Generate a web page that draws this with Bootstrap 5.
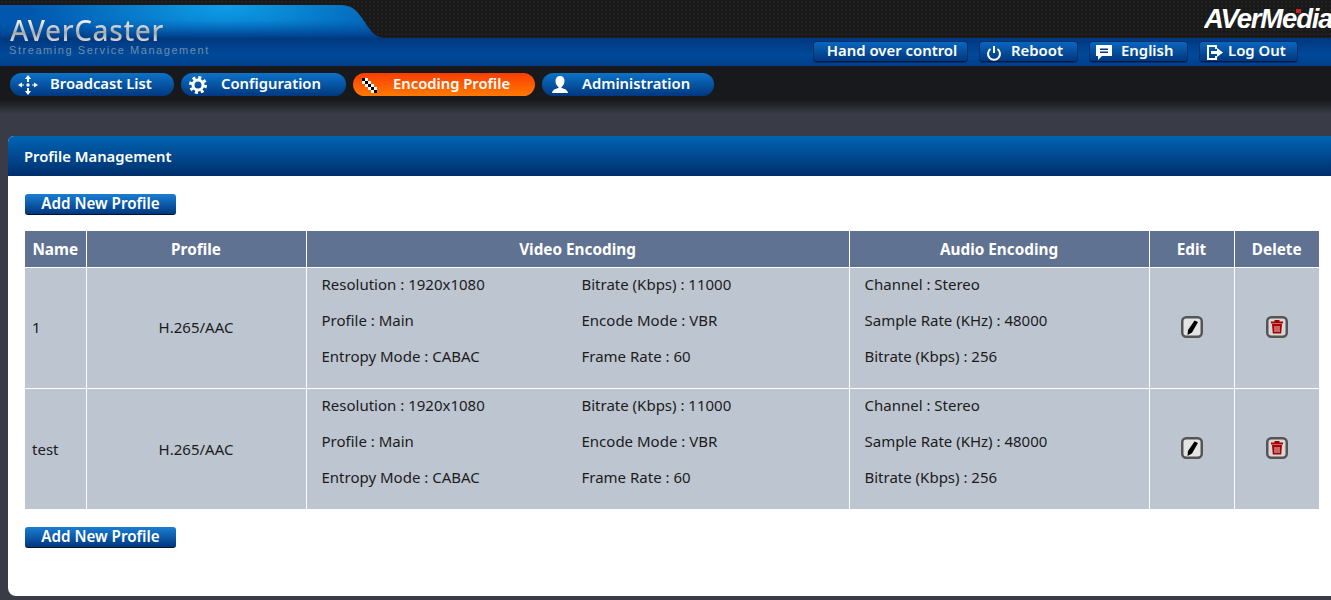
<!DOCTYPE html>
<html lang="en">
<head>
<meta charset="UTF-8">
<meta name="viewport" content="width=device-width, initial-scale=1.0">
<link href="https://cdn.jsdelivr.net/npm/bootstrap@5.3.0/dist/css/bootstrap.min.css" rel="stylesheet">
<title>AVerCaster</title>
<style>
html,body{height:600px;overflow:hidden;}
body{background:#393c46;font-family:"Noto Sans","Open Sans",sans-serif;font-size:15px;color:#1c1c1c;}
.app-head{height:66px;position:relative;background:#1a1a1a;}
.head-top{height:38px;background-color:#191919;background-image:radial-gradient(#222 0.7px,transparent 1px);background-size:4px 4px;display:flex;justify-content:flex-end;}
.brand-right{position:relative;color:#fff;font-family:"Liberation Sans",sans-serif;font-weight:700;font-style:italic;font-size:27.500px;letter-spacing:-1.200px;line-height:1;padding-top:5px;white-space:nowrap;width:127px;overflow:hidden;}
.brand-dot{position:absolute;left:92px;top:9px;width:5px;height:4px;background:#d0202a;}
.head-bar{height:28px;background:linear-gradient(#00377f,#004a99 60%,#003f8a);padding-left:814px;display:flex;gap:13px;padding-top:4px;}
.logo-shape{position:absolute;left:0;top:0;width:400px;height:66px;}
.logo-txt{position:absolute;left:9px;top:16px;line-height:1;}
.logo-name{font-family:"Noto Sans",sans-serif;font-size:28px;letter-spacing:.6px;font-weight:500;margin-left:1px;background:linear-gradient(#fff 10%,#a9a9a9 60%,#e8e8e8);-webkit-background-clip:text;background-clip:text;color:transparent;}
.logo-sub{font-family:"Liberation Sans",sans-serif;font-size:11px;letter-spacing:1.560px;color:#6f8cab;margin-top:1px;white-space:nowrap;}
.top-btn{width:97px;height:20px;border-radius:3px;background:linear-gradient(#0b66bd,#00387f);border:0;border-bottom:1px solid #001a3d;box-shadow:0 0 0 1px #00306e;color:#fff;font-weight:600;font-size:14.900px;line-height:18px;display:flex;align-items:center;white-space:nowrap;padding:0 0 4px;}
.top-btn svg{flex:none;margin:4px 7px 0 4px;}
.top-btn.handover{width:153px;padding-left:3px;justify-content:center;}
.top-btn.logout svg{margin-right:4px;}
.nav-strip{height:34px;background:#18191c;display:flex;gap:7px;padding:7px 0 0 10px;}
.pill{height:23px;border-radius:12px;background:linear-gradient(#0d72c8,#00387f);color:#fff;font-weight:600;font-size:14.800px;line-height:20px;display:flex;align-items:center;white-space:nowrap;padding-bottom:4px;}
.pill svg{flex:none;margin:4px 12px 0 8px;}
.pill.on{background:linear-gradient(#f93d00,#ff7a00);}
.pill.on svg{margin-right:16px;}
.pill.gear svg{margin-right:14px;}
.pill-broadcast{width:164px;}
.pill-config{width:165px;}
.pill-encoding{width:182px;}
.pill-admin{width:172px;}
.fade-strip{height:14px;background:linear-gradient(#18191c,#393c46);}
.mgmt-panel{margin:22px 0 0 8px;background:#fff;border-radius:6px 0 0 8px;height:460px;}
.mgmt-head{height:40px;background:linear-gradient(#0065b5,#002e6b);border-radius:6px 0 0 0;color:#fff;font-weight:600;font-size:14.800px;line-height:41px;padding-left:16px;}
.mgmt-body{padding:18px 12px 0 17px;}
.add-btn{display:block;width:151px;height:21px;padding:0 0 2px;border:0;border-radius:3px;background:linear-gradient(#1a7ed2,#00377f);border-bottom:1px solid #00122e;color:#fff;font-weight:600;font-size:15.200px;line-height:17px;}
.prof-table{border-collapse:collapse;table-layout:fixed;width:1294px;margin:16px 0 18px;}
.col-name{width:61px;}
.col-profile{width:220px;}
.col-video{width:543px;}
.col-audio{width:300px;}
.col-act{width:85px;}
.prof-table th{background:#5f7291;color:#fff;text-align:center;font-weight:700;font-size:15.300px;height:36px;border:1px solid #fff;border-top:0;padding:1px 0 0;}
.prof-table td{background:#bdc5d1;height:121px;border:1px solid #fff;padding:0;vertical-align:middle;}
.prof-table th:first-child,.prof-table td:first-child{border-left:0;}
.prof-table th:last-child,.prof-table td:last-child{border-right:0;}
.prof-table tr:last-child td{border-bottom:0;}
.prof-table td.name-cell{padding-left:7px;}
.prof-table td.info-cell{vertical-align:top;}
.info-grid{display:grid;grid-template-columns:260px 1fr;grid-auto-rows:36px;line-height:22px;padding:5px 0 0 15px;}
.info-one{grid-template-columns:1fr;}
.act-icon{display:block;margin:0 auto 1px;}
</style>
</head>
<body>
<header class="app-head">
  <div class="head-top"><div class="brand-right">AVerMedia<span class="brand-dot"></span></div></div>
  <div class="head-bar">
    <button class="top-btn handover">Hand over control</button>
    <button class="top-btn">
      <svg width="20" height="20" viewBox="0 0 20 20" fill="none" stroke="#fff" stroke-width="2"><path d="M6.500 7a6 6 0 1 0 7 0"/><path d="M10 4v7"/></svg>Reboot</button>
    <button class="top-btn">
      <svg width="20" height="20" viewBox="0 0 20 20" fill="#fff"><path d="M2 3h16v11H8l-4 4v-4H2z"/><path d="M6 6.500h8V8H6zM6 9.500h8V11H6z" fill="#00387f"/></svg>English</button>
    <button class="top-btn logout">
      <svg width="20" height="20" viewBox="0 0 20 20" fill="#fff"><path d="M3 3h10v4h-2V5H5v11h6v-2h2v4H3z"/><path d="M7 9h6V6l6 4.500-6 4.500v-3H7z"/></svg>Log Out</button>
  </div>
  <svg class="logo-shape" viewBox="0 0 400 66">
    <defs>
      <radialGradient id="lg" gradientUnits="userSpaceOnUse" cx="225" cy="5" r="200" gradientTransform="matrix(1 0 0 .3 0 4)"><stop offset="0" stop-color="#0e9ee8"/><stop offset="1" stop-color="#0057ad"/></radialGradient>
      <linearGradient id="lb" x1="0" y1="0" x2="0" y2="1"><stop offset=".45" stop-color="#0057ad" stop-opacity="0"/><stop offset="1" stop-color="#003c86"/></linearGradient>
    </defs>
    <path d="M0 5H340C352 5 356 10 362 18C370 30 374 38 384 38H0Z" fill="url(#lg)"/>
    <path d="M0 5H340C352 5 356 10 362 18C370 30 374 38 384 38H0Z" fill="url(#lb)"/>
  </svg>
  <div class="logo-txt"><div class="logo-name">AVerCaster</div><div class="logo-sub">Streaming Service Management</div></div>
</header>
<nav class="nav-strip">
  <div class="pill pill-broadcast">
    <svg width="20" height="20" viewBox="0 0 20 20" fill="#fff"><path d="M10 0l3 4h-2v3H9V4H7zM10 20l-3-4h2v-3h2v3h2zM0 10l4-2.500v2h2v1H4v2zM20 10l-4 2.500v-2h-2v-1h2v-2z"/><circle cx="10" cy="10" r="1.700"/></svg>Broadcast List</div>
  <div class="pill gear pill-config">
    <svg width="18" height="18" viewBox="0 0 18 18" fill="none" stroke="#fff"><circle cx="9" cy="9" r="5" stroke-width="3"/><circle cx="9" cy="9" r="7.500" stroke-width="3" stroke-dasharray="3 2.900"/></svg>Configuration</div>
  <div class="pill on pill-encoding">
    <svg width="16" height="16" viewBox="0 0 16 16"><path d="M1 1h3v3H1zM4 4h3v3H4zM7 7h3v3H7zM10 10h3v3h-3zM13 13h3v3h-3z" fill="#000"/><path d="M4 1h3v3H4zM1 4h3v3H1zM7 4h3v3H7zM4 7h3v3H4zM10 7h3v3h-3zM7 10h3v3H7zM13 10h3v3h-3zM10 13h3v3h-3z" fill="#fff"/></svg>Encoding Profile</div>
  <div class="pill pill-admin">
    <svg width="20" height="20" viewBox="0 0 20 20" fill="#fff"><path d="M10 1c3 0 4.500 2 4.500 5s-1.500 5-3 6v1c3 1 6 1.500 6.500 5H2c.5-3.500 3.500-4 6.500-5v-1c-1.500-1-3-3-3-6s1.500-5 4.500-5z"/></svg>Administration</div>
</nav>
<div class="fade-strip"></div>
<main class="mgmt-panel">
  <div class="mgmt-head">Profile Management</div>
  <div class="mgmt-body">
    <button class="add-btn">Add New Profile</button>
    <table class="prof-table">
      <colgroup><col class="col-name"><col class="col-profile"><col class="col-video"><col class="col-audio"><col class="col-act"><col class="col-act"></colgroup>
      <thead><tr><th>Name</th><th>Profile</th><th>Video Encoding</th><th>Audio Encoding</th><th>Edit</th><th>Delete</th></tr></thead>
      <tbody id="rows"></tbody>
    </table>
    <button class="add-btn">Add New Profile</button>
  </div>
</main>
<script>
const profiles = ["1", "test"];
document.getElementById("rows").innerHTML = profiles.map(name => `
  <tr>
    <td class="name-cell">${name}</td>
    <td class="text-center">H.265/AAC</td>
    <td class="info-cell"><div class="info-grid">
      <div>Resolution : 1920x1080</div><div>Bitrate (Kbps) : 11000</div>
      <div>Profile : Main</div><div>Encode Mode : VBR</div>
      <div>Entropy Mode : CABAC</div><div>Frame Rate : 60</div>
    </div></td>
    <td class="info-cell"><div class="info-grid info-one">
      <div>Channel : Stereo</div>
      <div>Sample Rate (KHz) : 48000</div>
      <div>Bitrate (Kbps) : 256</div>
    </div></td>
    <td><svg class="act-icon" width="22" height="22" viewBox="0 0 22 22"><rect x="1.250" y="1.250" width="19.500" height="19.500" rx="4" fill="#e4e4e4" stroke="#555" stroke-width="2.500"/><path d="M13.500 4.500l3.500 1.500-6 10.500-4.500 2.500.5-5z" fill="#000"/></svg></td>
    <td><svg class="act-icon" width="22" height="22" viewBox="0 0 22 22"><rect x="1.250" y="1.250" width="19.500" height="19.500" rx="4" fill="#d8d8d8" stroke="#555" stroke-width="2.500"/><path d="M5 5.500h12v2H5zM8.500 4h5v1.500h-5zM6 8h10l-.8 9.500H6.800z" fill="#a80000"/><path d="M9 10v6M11 10v6M13 10v6" stroke="#fff" stroke-width=".8"/></svg></td>
  </tr>`).join("");
</script>
<script src="https://cdn.jsdelivr.net/npm/bootstrap@5.3.0/dist/js/bootstrap.bundle.min.js"></script>
</body>
</html>
